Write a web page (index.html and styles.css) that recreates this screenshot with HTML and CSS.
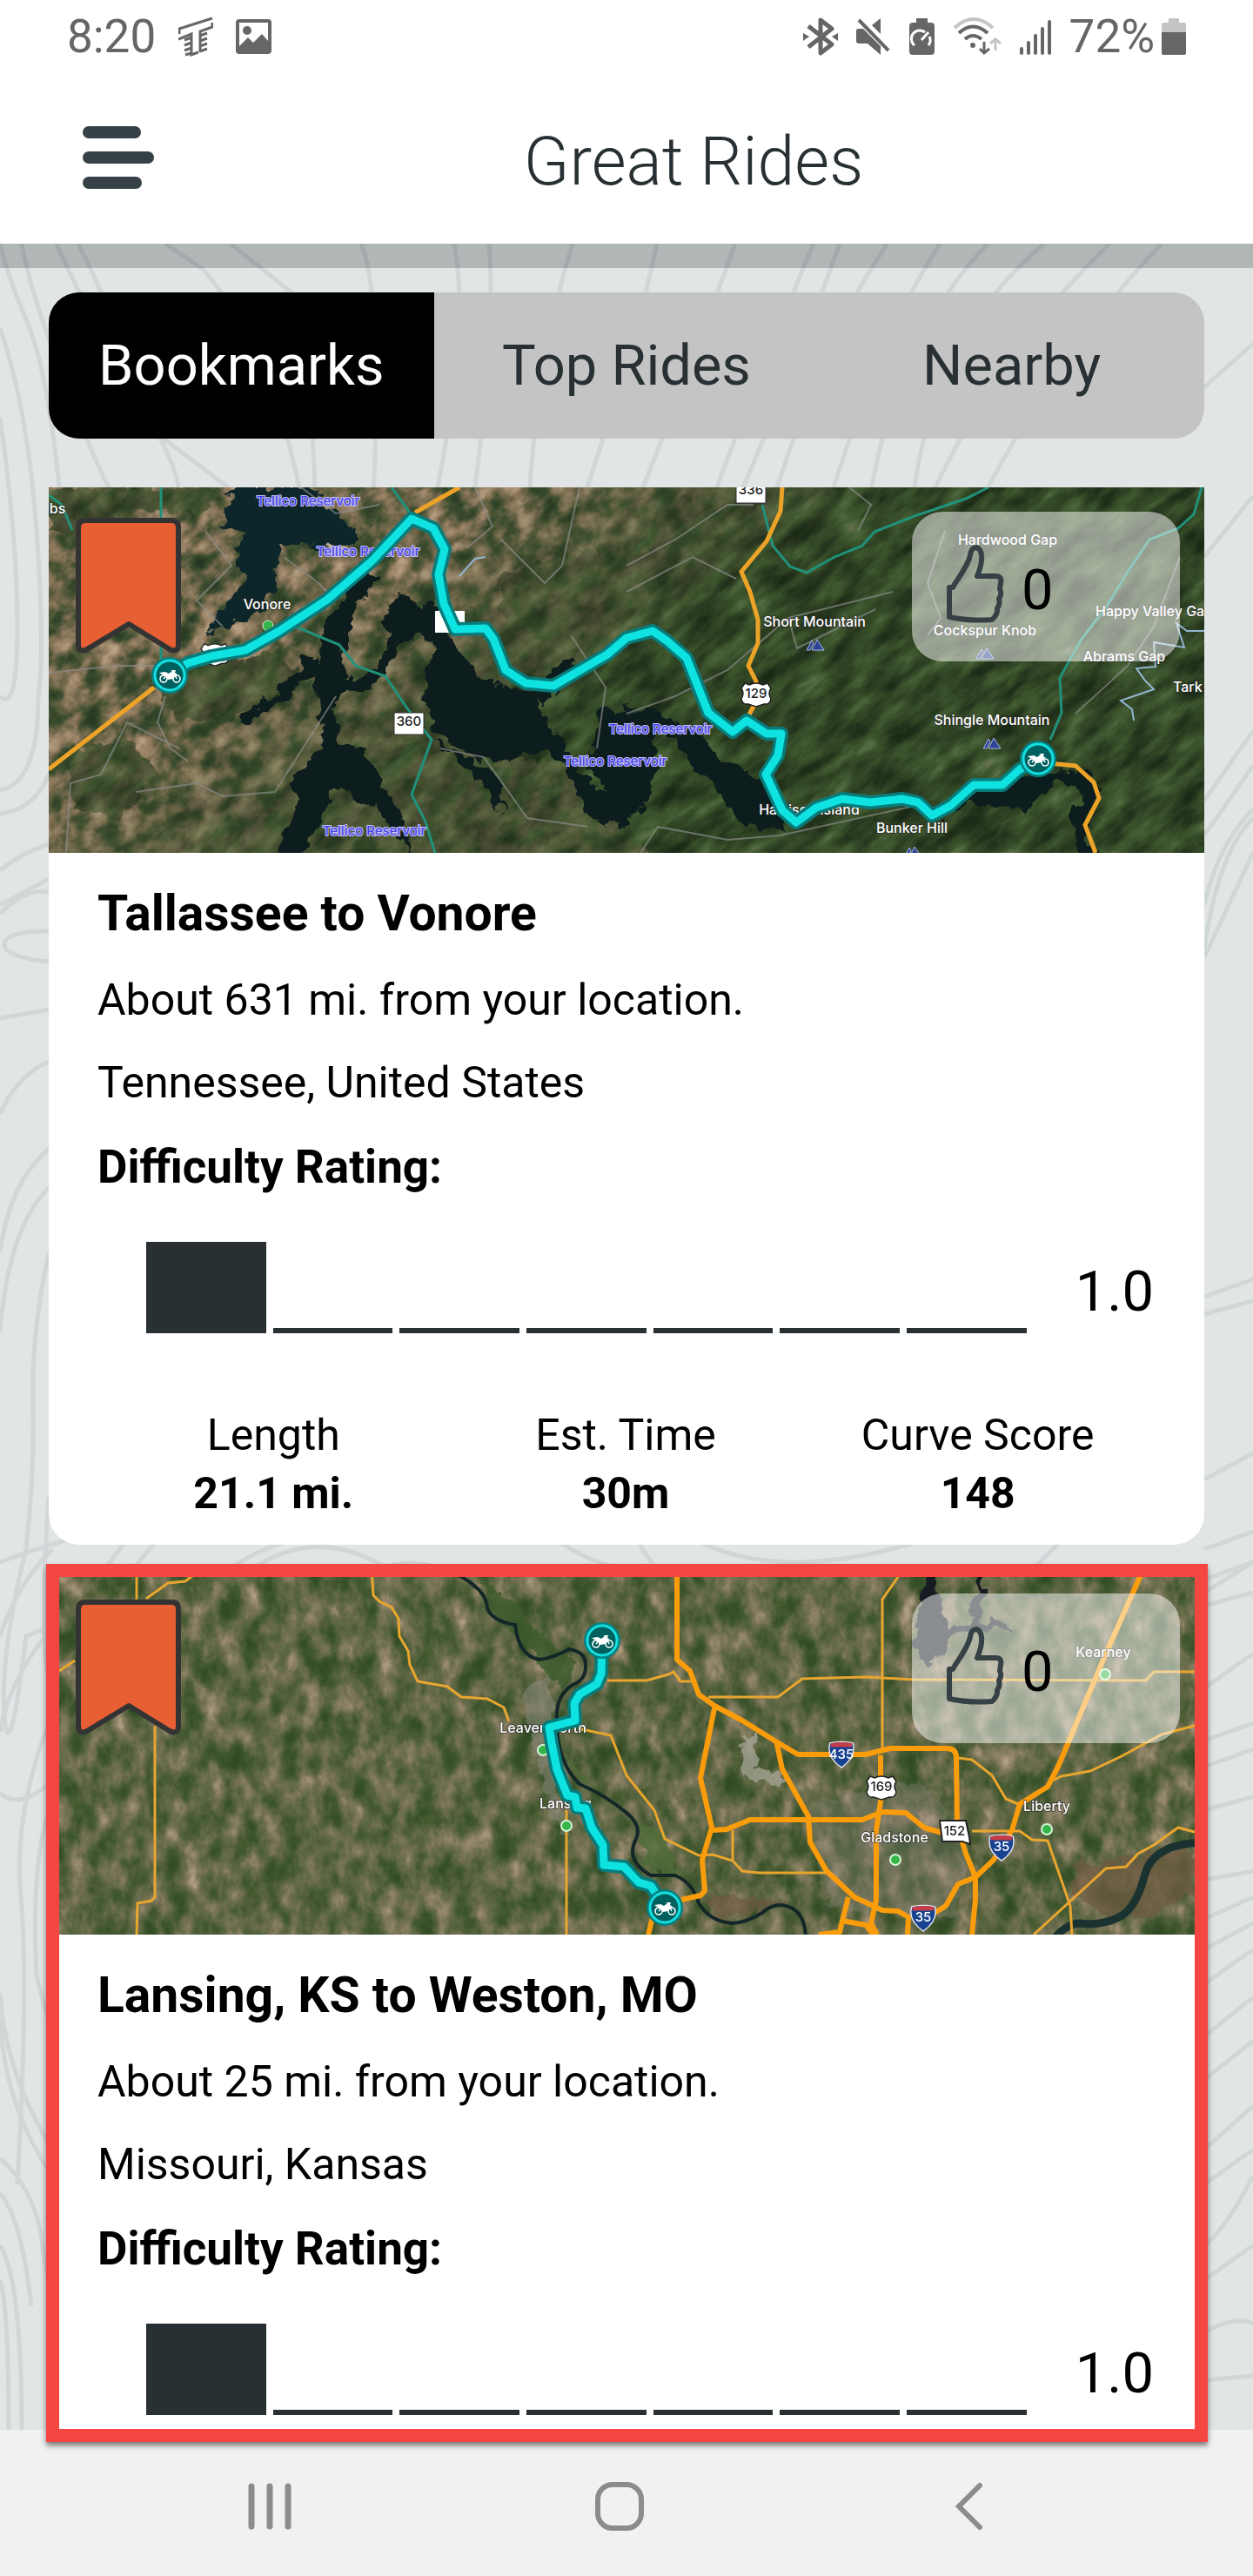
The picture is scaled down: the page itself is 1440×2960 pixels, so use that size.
FILE: index.html
```html
<!DOCTYPE html>
<html lang="en">
<head>
	<meta charset="utf-8">
	<meta name="viewport" content="width=device-width, initial-scale=1">
	<title>Great Rides</title>
	<link rel="stylesheet" href="styles.css">
</head>
<body>
<!-- shared filters and symbols -->
<svg class="defs" width="0" height="0" aria-hidden="true">
	<defs>
		<filter id="farm" x="0" y="0" width="1" height="1" color-interpolation-filters="sRGB">
			<feTurbulence type="fractalNoise" baseFrequency=".035 .045" numOctaves="6" seed="14"/>
			<feColorMatrix values=".6 .4 0 0 0  .6 .4 0 0 0  .6 .4 0 0 0  0 0 0 0 1"/>
			<feComponentTransfer>
				<feFuncR type="table" tableValues=".14 .14 .15 .18 .25 .42 .57 .68 .75 .8 .8"/>
				<feFuncG type="table" tableValues=".2 .2 .21 .25 .31 .39 .49 .59 .66 .7 .7"/>
				<feFuncB type="table" tableValues=".13 .13 .13 .15 .19 .28 .38 .48 .55 .6 .6"/>
			</feComponentTransfer>
		</filter>
		<filter id="forest" x="0" y="0" width="1" height="1" color-interpolation-filters="sRGB">
			<feTurbulence type="fractalNoise" baseFrequency=".02 .055" numOctaves="6" seed="9"/>
			<feColorMatrix values="1 0 0 0 0  1 0 0 0 0  1 0 0 0 0  0 0 0 0 1"/>
			<feComponentTransfer>
				<feFuncR type="table" tableValues=".1 .1 .11 .14 .17 .2 .23 .26 .32 .4 .4"/>
				<feFuncG type="table" tableValues=".16 .16 .17 .2 .24 .28 .32 .36 .41 .45 .45"/>
				<feFuncB type="table" tableValues=".08 .08 .09 .11 .13 .15 .17 .2 .25 .3 .3"/>
			</feComponentTransfer>
		</filter>
		<filter id="plains" x="0" y="0" width="1" height="1" color-interpolation-filters="sRGB">
			<feTurbulence type="fractalNoise" baseFrequency=".045 .03" numOctaves="7" seed="37"/>
			<feColorMatrix values=".5 .5 0 0 0  .5 .5 0 0 0  .5 .5 0 0 0  0 0 0 0 1"/>
			<feComponentTransfer>
				<feFuncR type="table" tableValues=".18 .18 .19 .21 .27 .36 .46 .58 .7 .75 .75"/>
				<feFuncG type="table" tableValues=".28 .28 .29 .31 .35 .4 .45 .53 .63 .68 .68"/>
				<feFuncB type="table" tableValues=".14 .14 .14 .16 .19 .26 .33 .42 .52 .57 .57"/>
			</feComponentTransfer>
		</filter>
		<filter id="shore" x="-.05" y="-.05" width="1.1" height="1.1">
			<feTurbulence type="fractalNoise" baseFrequency=".06" numOctaves="3" seed="2"/>
			<feDisplacementMap in="SourceGraphic" scale="22" xChannelSelector="R" yChannelSelector="G"/>
		</filter>
		<linearGradient id="fade" x1="0" y1="0" x2="1" y2=".45">
			<stop offset=".34" stop-color="#000"/>
			<stop offset=".6" stop-color="#fff"/>
		</linearGradient>
		<mask id="forestMask">
			<rect width="1328" height="420" fill="url(#fade)"/>
			<g fill="#aaa" filter="url(#shore)">
				<path d="M290 430 340 340 450 300 600 320 700 430ZM120 230 190 200 250 190 300 215 240 260 150 270ZM20 300 90 290 130 330 80 380 30 370ZM0 0 190 0 180 30 100 25 40 60 0 50ZM520 100 620 70 680 110 640 190 560 210 520 160Z"/>
			</g>
		</mask>
	</defs>
	<symbol id="pin" viewBox="-22 -22 44 44">
		<circle r="21" fill="#067f80"/>
		<circle r="17" fill="#00605f" stroke="#14dfe0" stroke-width="3"/>
		<g fill="none" stroke="#fff" stroke-width="1.6">
			<circle cx="-7" cy="4" r="4"/>
			<circle cx="8" cy="4" r="4"/>
			<path d="M-7 4-3-1M8 4 4-5"/>
		</g>
		<path d="M-12-3-5-4-1-2 3-5 1-6 7-6 6-3 9-1 5 0 4 4-2 5-5 1-9-1Z" fill="#fff"/>
	</symbol>
	<symbol id="peak" viewBox="0 0 20 14"><path d="M0 13 6 2 8 5 4 13ZM6 13 12 1 20 13Z" fill="#2c4391" stroke="#a9b7ea" stroke-width="1"/></symbol>
	<symbol id="interstate" viewBox="0 0 34 34">
		<path d="M3 3Q17 0 31 3 36 20 17 33-2 20 3 3Z" fill="#174391" stroke="#e6e6f0" stroke-width="1.5"/>
		<path d="M4 3.500Q17 1 30 3.500V8H4Z" fill="#c53d49"/>
	</symbol>
	<symbol id="usroute" viewBox="0 0 36 30"><path d="M5 2 10 4Q18 0 26 4L31 2 35 8Q31 13 35 20 34 27 27 26L18 29 9 26Q2 27 1 20 5 13 1 8Z" fill="#fff" stroke="#222" stroke-width="1.500"/></symbol>
	<symbol id="bookmark" viewBox="0 0 121 156"><path d="M3 11Q3 3 11 3H110Q118 3 118 11V145Q118 156 108 151L61 122 13 151Q3 156 3 145Z" fill="#e75f32" stroke="#333" stroke-width="6" stroke-linejoin="round"/></symbol>
	<symbol id="thumb" viewBox="0 0 66 90"><path d="M3 49H7C12 39 24 26 27 12 28 5 31 3 34 3 41 5 43 17 35 36H56Q64 36 62 44L61 51Q64 56 60 62 62 68 58 73 59 80 52 86 25 88 3 83Z" fill="none" stroke="#364145" stroke-width="6" stroke-linejoin="round"/></symbol>
	<path id="ride1" d="M139 216 160 202 187 194 226 187 265 165 320 129 371 85 417 36 442 47 455 71 448 100 454 134 467 163 502 162 511 174 525 210 548 225 580 228 642 192 664 173 694 165 710 176 733 196 758 259 786 281 802 268 825 283 842 283 838 308 824 330 843 371 859 385 882 368 912 358 944 362 981 358 999 362 1015 377 1036 366 1063 342 1096 342 1116 324 1137 312"/>
	<path id="ride2" d="M636 82 635 120 630 132 610 144 604 154 605 174 575 182 578 200 584 230 596 260 605 262 607 274 617 275 624 297 637 317 638 340 661 342 678 360 692 364 708 389"/>
</svg>

<div class="statusbar">
	<div class="status-left">
		<span class="clock">8:20</span>
		<svg width="40" height="46" viewBox="0 0 40 46" fill="none" stroke="#666" stroke-width="3">
			<path d="M1 20V14L39 2M0 26 15 20V44L23 41M39 7V12L25 17V41M15 24 7 27M15 30 7 33M15 36 7 39M15 42 8 44M25 22 33 19M25 28 33 25M25 34 33 31M25 40 33 37"/>
		</svg>
		<svg class="picture-icon" width="41" height="40" viewBox="0 0 41 40">
			<path fill="#666" fill-rule="evenodd" d="M4 0H37Q41 0 41 4V36Q41 40 37 40H4Q0 40 0 36V4Q0 0 4 0ZM4 4V31L14 21 20 27 30 17 37 25V4Z"/>
			<circle cx="13" cy="13" r="5" fill="#666"/>
		</svg>
	</div>
	<div class="status-right">
		<svg width="40" height="44" viewBox="0 0 40 44">
			<path d="M6 10 33 31 20 41V3L33 13 6 34" fill="none" stroke="#666" stroke-width="5" stroke-linejoin="round"/>
			<path d="M0 18V27L7 22ZM40 18V27L33 22Z" fill="#666"/>
		</svg>
		<svg width="40" height="44" viewBox="0 0 40 44">
			<path d="M0 15Q0 13 3 13H8L28 33V43L13 30H3Q0 30 0 27ZM18 9 28 1V19Z" fill="#666"/>
			<path d="M3 3 37 38" stroke="#666" stroke-width="4"/>
		</svg>
		<svg width="29" height="44" viewBox="0 0 29 44">
			<path d="M8 1H21V6H25Q29 6 29 10V39Q29 43 25 43H4Q0 43 0 39V10Q0 6 4 6H8Z" fill="#666"/>
			<path d="M6 32A9 9 0 0 1 18 17M23 22A9 9 0 0 1 22 32M14 26 22 17" fill="none" stroke="#fff" stroke-width="3"/>
		</svg>
		<svg width="56" height="44" viewBox="0 0 56 44" fill="none">
			<path d="M2 12Q24-8 46 12" stroke="#c4c4c4" stroke-width="4"/>
			<path d="M7 18Q23 3 40 18M14 25Q23 17 33 25" stroke="#666" stroke-width="4"/>
			<circle cx="23" cy="32" r="3" fill="#666"/>
			<path d="M36 28V41M31 36 36 41 42 36" stroke="#666" stroke-width="3"/>
			<path d="M49 38V25M43 30 49 25 55 30" stroke="#c4c4c4" stroke-width="3"/>
		</svg>
		<svg width="36" height="44" viewBox="0 0 36 44"><path d="M2 36V41M10 29V41M18 21V41M26 13V41M34 5V41" stroke="#666" stroke-width="4" stroke-linecap="round"/></svg>
		<span class="battery">72%
			<svg width="28" height="44" viewBox="0 0 28 44">
				<path d="M8 1H20V6H26Q28 6 28 8V18H0V8Q0 6 2 6H8Z" fill="#c4c4c4"/>
				<path d="M0 17H28V41Q28 43 26 43H2Q0 43 0 41Z" fill="#666"/>
			</svg>
		</span>
	</div>
</div>

<header class="header">
	<button class="menu" type="button" aria-label="Menu">
		<svg width="82" height="74" viewBox="0 0 82 74" stroke="#364145" stroke-width="14" stroke-linecap="round"><path d="M7 7H60M7 36H75M7 65H61"/></svg>
	</button>
	<h1>Great Rides</h1>
</header>

<main class="content">
	<!-- contour lines -->
	<svg class="contours" viewBox="0 0 1440 2512" preserveAspectRatio="xMidYMin slice" fill="none" stroke="#d1d6d7" stroke-width="5" aria-hidden="true">
		<path d="M0 0Q8 35 32 92T70 300M25 0Q35 60 90 200T150 290M65 0Q90 60 160 180T190 290M90 0Q120 60 188 224L262 280M190 0 234 30Q310 120 344 280M265 0 340 60Q360 180 362 290M415 0Q440 60 429 290M522 0Q540 90 503 280M562 0Q570 90 546 280M658 0Q620 120 608 290M755 0 730 110 675 280M845 0 790 150 735 290M935 0Q880 130 820 290M965 0Q930 100 850 290M1020 0Q950 100 890 290M1080 0Q1010 110 955 290M1135 0Q1030 110 1000 290M1200 0Q1070 110 1050 290M1275 0Q1150 120 1070 290M1335 0Q1220 120 1130 290"/>
		<path d="M0 97Q32 190 42 330T44 521Q44 620 0 628M0 200Q20 340 20 440T0 520M0 655Q40 650 56 610M0 720Q25 700 56 690M0 760 56 730M1384 165 1440 115M1384 360 1440 290M1384 640 1440 560M1384 680 1440 600M1384 760Q1400 690 1440 650M1384 820 1440 700"/>
		<path d="M0 770Q30 740 56 745M56 790Q5 790 5 805T56 825M0 890 56 880M0 1000Q20 955 56 940M0 1160Q10 1080 56 1040M0 1250Q10 1130 56 1085M56 1160Q36 1250 38 1330T30 1500Q0 1620 5 1690T30 1600L56 1590M56 1440Q45 1600 56 1650M0 1780Q20 1800 56 1770M1384 810Q1400 700 1440 660M1384 1210 1440 1190M1384 1230 1440 1215M1384 1420 1440 1390M1384 1500 1440 1480M1384 1535 1440 1515M1384 1565 1440 1550"/>
		<path d="M0 1515Q40 1500 75 1490M100 1550 145 1490M130 1550 180 1490M255 1530Q330 1470 430 1490M280 1530Q370 1460 470 1540M430 1525Q480 1505 520 1530M640 1490Q700 1530 760 1525M735 1495 755 1525M800 1490Q900 1540 1060 1490M1180 1530 1220 1490M0 1600Q20 1540 60 1500M0 1710Q10 1650 60 1590M60 1690Q15 1800 24 1900T20 2230M60 1790Q35 1850 42 1990L60 2060M0 2010Q5 2100 60 2190M0 2040Q5 2140 60 2220M0 2200Q45 2240 50 2310L60 2360M0 2240Q25 2270 36 2370M0 2300Q25 2340 25 2512M0 2340Q10 2370 10 2512M1384 1550 1440 1515M1384 1660 1440 1620M1384 1720 1440 1700M1384 1750 1440 1730M1384 1800 1440 1785M1384 1880 1440 1870M1384 1925 1440 1900M1384 1960 1440 1930"/>
		<path d="M1384 2000 1440 1960M1384 2060 1440 2015M1384 2110 1440 2065M1384 2190 1440 2140M1384 2230 1440 2190M1384 2300Q1410 2280 1440 2220M1384 2340 1440 2300M1384 2400Q1420 2380 1440 2390M1384 2455 1440 2450"/>
	</svg>

	<div class="tabs" role="tablist">
		<button class="tab active" type="button" role="tab" aria-selected="true">Bookmarks</button>
		<button class="tab" type="button" role="tab" aria-selected="false">Top Rides</button>
		<button class="tab" type="button" role="tab" aria-selected="false">Nearby</button>
	</div>

	<article class="card">
		<div class="map">
			<svg class="map-art" viewBox="0 0 1328 420" preserveAspectRatio="xMidYMid slice" role="img" aria-label="Map of Tallassee to Vonore">
				<g transform="rotate(-35 664 210)"><rect x="-300" y="-700" width="2000" height="1800" filter="url(#farm)"/></g>
				<g mask="url(#forestMask)"><rect x="-300" y="-700" width="2000" height="1800" filter="url(#forest)" transform="rotate(-38 664 210)"/></g>
				<!-- reservoir -->
				<g fill="#0f1f1c" filter="url(#shore)">
					<path fill="#10272a" d="M203 0 215 25 190 45 222 50 215 80 225 110 210 130 180 170 215 155 245 140 260 120 265 65 330 68 358 64 345 35 310 20 312 0Z"/>
					<path d="M355 98 316 165 307 210 311 268 316 299 279 330 284 370 255 430H290L330 344 380 370 420 430 395 360 364 304 334 290 330 250 337 236 376 232 403 178 431 170 450 187 431 219 440 277 490 312 523 314 578 304 596 326 605 361 640 392 665 370 620 335 587 290 564 254 550 237 495 219 470 183 445 138 403 123 385 140 392 170 375 210 339 220 340 174 352 143 378 98Z"/>
					<path d="M307 190 260 235 218 270 225 275 270 240 312 215ZM440 290 500 340 525 375 515 330ZM550 240 600 195 605 200 570 250Z"/>
					<path d="M664 250 700 259 740 277 765 308 806 326 825 348 850 395 800 393 774 357 737 312 710 281 673 281ZM632 256 700 258 694 335 680 375 655 388 640 350 620 320Z"/>
					<path d="M999 362 1018 385 1059 364 1123 370 1160 339 1190 350 1174 384 1185 430H1205L1190 390 1210 350 1192 326 1137 322 1063 350 1015 382Z"/>
				</g>
				<!-- local roads -->
				<g fill="none" stroke="#8f8f8d" stroke-opacity=".65" stroke-width="2">
					<path d="M0 213 80 205 123 205M134 240 125 270 140 300 160 315M20 420 25 340 60 330 90 270 150 300M100 350 170 340 200 355 260 350 330 240M180 50 210 90 170 130 200 160M270 80 310 110 330 130M490 0 510 45 480 70M520 60 570 110 590 90 610 0M450 300 500 310 550 380 620 390M380 20 330 30 290 0M664 90 720 60 780 20 810 20M664 120 740 80 790 105M664 260 720 240 780 210 850 150 970 120M850 150 860 185 950 140M920 0 945 20 930 50M1010 170 1025 150 1010 110 1030 50M1180 260 1240 205 1270 160 1300 80M680 420 700 390 780 405 840 400 1000 365M600 170 640 230 630 300"/>
				</g>
				<g fill="none" stroke="#21917b" stroke-width="3">
					<path d="M0 9 15 20 27 49M129 0V200M394 0 417 32M286 161 334 181 353 205 387 217 412 254 440 290 417 353 433 384 444 420M820 20 832 67 852 91 871 98 903 80 935 67 949 51 995 33 1054 13 1080 0M1325 0 1316 31 1298 47 1265 60 1242 94 1215 138 1187 174 1162 219 1164 259 1151 290"/>
				</g>
				<path d="M1328 165 1308 165 1296 156 1305 184 1270 178 1272 206 1250 208 1260 222 1270 232 1232 245 1245 255 1247 268M472 102 490 82 502 80" fill="none" stroke="#93b6d1" stroke-width="2"/>
				<path d="M0 324 121 230M421 29 472 0M843 0 841 27 825 62 796 97 806 120 815 152 815 179 804 205 813 223 811 250 800 270M1150 317 1180 320 1201 339 1207 357 1191 388 1203 420" fill="none" stroke="#eda328" stroke-width="5"/>

				<rect x="444" y="142" width="34" height="25" fill="#fff"/>
				<rect x="397" y="259" width="34" height="25" fill="#fff" stroke="#333"/>
				<rect x="790" y="-12" width="34" height="30" fill="#fff" stroke="#333"/>
				<use href="#usroute" x="794" y="223" width="38" height="30"/>
				<use href="#usroute" x="173" y="178" width="36" height="28"/>
				<circle cx="252" cy="159" r="6" fill="#36b549" stroke="#d7f5d7"/>
				<g class="shield-text">
					<text x="414" y="274">360</text>
					<text x="807" y="8">336</text>
					<text x="813" y="242">129</text>
				</g>
				<g class="water-label">
					<text x="298" y="21">Tellico Reservoir</text>
					<text x="367" y="79">Tellico Reservoir</text>
					<text x="374" y="400">Tellico Reservoir</text>
					<text x="703" y="283">Tellico Reservoir</text>
					<text x="651" y="320">Tellico Reservoir</text>
				</g>
				<g class="place-label">
					<text x="10" y="30">bs</text>
					<text x="251" y="140">Vonore</text>
					<text x="880" y="160">Short Mountain</text>
					<text x="1102" y="66">Hardwood Gap</text>
					<text x="1076" y="170">Cockspur Knob</text>
					<text x="1236" y="200">Abrams Gap</text>
					<text x="1084" y="273">Shingle Mountain</text>
					<text x="874" y="376">Harrison Island</text>
					<text x="992" y="397">Bunker Hill</text>
					<text x="1203" y="148" class="from-left">Happy Valley Ga</text>
					<text x="1292" y="235" class="from-left">Tark</text>
				</g>
				<use href="#peak" x="871" y="174" width="20" height="14"/>
				<use href="#peak" x="1066" y="184" width="20" height="14"/>
				<use href="#peak" x="1074" y="287" width="20" height="14"/>
				<use href="#peak" x="983" y="412" width="20" height="14"/>

				<use href="#ride1" class="route-edge"/>
				<use href="#ride1" class="route"/>
				<use href="#pin" x="117" y="194" width="44" height="44"/>
				<use href="#pin" x="1115" y="290" width="44" height="44"/>
			</svg>
			<button class="bookmark" type="button" aria-label="Remove bookmark"><svg width="121" height="156"><use href="#bookmark"/></svg></button>
			<button class="like" type="button" aria-label="Like"><svg width="66" height="90"><use href="#thumb"/></svg><span>0</span></button>
		</div>
		<div class="info">
			<h2>Tallassee to Vonore</h2>
			<p>About 631 mi. from your location.</p>
			<p>Tennessee, United States</p>
			<h3>Difficulty Rating:</h3>
			<div class="rating">
				<div class="bars"><i class="on"></i><i></i><i></i><i></i><i></i><i></i><i></i></div>
				<span class="score">1.0</span>
			</div>
			<dl class="stats">
				<div><dt>Length</dt><dd>21.1 mi.</dd></div>
				<div><dt>Est. Time</dt><dd>30m</dd></div>
				<div><dt>Curve Score</dt><dd>148</dd></div>
			</dl>
		</div>
	</article>

	<article class="card selected">
		<div class="map">
			<svg class="map-art" viewBox="0 0 1328 420" preserveAspectRatio="xMidYMid slice" role="img" aria-label="Map of Lansing, KS to Weston, MO">
				<rect width="1328" height="420" filter="url(#plains)"/>
				<!-- towns, airport and river bottoms -->
				<g filter="url(#shore)">
					<path d="M800 190 815 190 815 225 845 240 830 250 795 240Z" fill="#aaa99b" opacity=".7"/>
					<path d="M545 150 575 110 580 180 580 240 600 310 580 290 560 220Z" fill="#8d8f82" opacity=".45"/>
					<path d="M870 270 1000 240 1060 320 1040 400 900 390Z" fill="#8d8880" opacity=".3"/>
					<path d="M495 10 530 40 580 90 610 110 590 140 560 100 510 50Z" fill="#3b5b2c" opacity=".8"/>
					<path d="M590 210 640 260 700 300 730 350 690 350 670 280 610 240Z" fill="#4f6c38" opacity=".8"/>
					<path d="M755 375 850 380 800 400 765 400ZM1180 340 1316 320 1316 370 1270 400 1220 400 1180 380Z" fill="#6f5b45" opacity=".7"/>
				</g>
				<path d="M1005 0 1020 0 1022 40 1035 70 1060 60 1068 0 1074 0 1072 58 1100 62 1110 72 1065 68 1030 85 1010 115 992 85 1000 50Z" fill="#141f24" filter="url(#shore)"/>
				<path d="M455 0Q480 10 490 20 503 30 504 45 510 60 536 64 540 100 564 104 580 102 598 92 617 95 617 110 618 127 602 133 584 145 584 167 582 220 610 247 640 260 664 280 682 295 675 310 662 335 692 352H720Q740 360 747 384 760 405 785 407 800 407 820 395 830 385 843 386 870 390 870 425" fill="none" stroke="#142728" stroke-width="4"/>
				<path d="M1155 425Q1170 407 1185 407 1210 410 1230 400 1250 390 1260 350 1270 315 1328 314" fill="none" stroke="#1b3330" stroke-width="9"/>

				<g fill="none" stroke="#e8a62f" stroke-width="3">
					<path d="M101 0V35M175 0 157 14 137 16 112 34M0 125 30 105M122 180V377L118 381 102 384 101 420M371 0 373 30 380 37 394 44 402 57 403 77 413 94 415 110 424 129 458 135 474 147 504 149 523 159 529 175M595 277V420M612 184 646 191 664 237 696 277 708 310 747 329 763 328 786 335 797 347 816 349 894 349M786 335V300"/>
					<path d="M642 128 687 128 712 121 718 118 726 129 740 129M758 147 838 147 866 126 939 124 995 127 1261 128 1270 118 1328 118M980 0 976 9 958 35V207M1045 217 1061 219 1084 237 1100 264 1114 270M1151 244 1164 238 1197 232 1233 215 1279 190 1328 177M1061 301 1116 301 1130 311 1148 312 1174 387 1176 420M1132 420 1215 344 1238 342 1252 327 1270 317 1298 297 1328 305"/>
				</g>
				<g fill="none" stroke="#fb9c0b" stroke-width="6" stroke-linejoin="round">
					<path d="M722 0V104L737 117 747 144 765 157 797 174 834 197 861 213 939 213 967 206 1031 206Q1043 206 1043 216L1044 294 1054 327 1065 354V380L1061 420M765 160 749 240 762 297 751 334 754 370 749 375 727 380M694 400 689 420M836 197 843 230 873 284 875 314 894 347 926 377 958 392 976 393 988 400 987 420M762 300 779 299 806 288 935 288 958 279 985 280 1006 297 1030 304"/>
					<path d="M956 214V267L951 300V380L945 407 952 420M919 377 912 404 939 409 948 420M912 404 909 417 885 420M1258 0 1215 97 1160 227 1148 250 1116 270 1107 300 1086 334 1065 354 1045 362 1031 387 1005 403"/>
				</g>

				<use href="#interstate" x="894" y="197" width="34" height="32"/>
				<use href="#interstate" x="1078" y="304" width="34" height="32"/>
				<use href="#interstate" x="988" y="385" width="34" height="32"/>
				<use href="#usroute" x="938" y="236" width="38" height="30"/>
				<path d="M1024 289 1054 289 1058 308 1059 316 1050 313H1027Z" fill="#fff" stroke="#222" stroke-width="2"/>
				<g class="shield-text">
					<text x="957" y="255">169</text>
					<text x="1041" y="306">152</text>
					<g class="light">
						<text x="911" y="218">435</text>
						<text x="1095" y="324">35</text>
						<text x="1005" y="405">35</text>
					</g>
				</g>
				<g fill="#36b549" stroke="#d7f5d7" stroke-width="2">
					<circle cx="568" cy="208" r="6"/>
					<circle cx="595" cy="295" r="6"/>
					<circle cx="973" cy="334" r="6"/>
					<circle cx="1147" cy="299" r="6"/>
					<circle cx="1214" cy="121" r="6"/>
				</g>
				<g class="place-label">
					<text x="568" y="188">Leavenworth</text>
					<text x="594" y="275">Lansing</text>
					<text x="972" y="314">Gladstone</text>
					<text x="1147" y="278">Liberty</text>
					<text x="1212" y="101">Kearney</text>
				</g>

				<use href="#ride2" class="route-edge"/>
				<use href="#ride2" class="route"/>
				<use href="#pin" x="614" y="60" width="44" height="44"/>
				<use href="#pin" x="686" y="367" width="44" height="44"/>
			</svg>
			<button class="bookmark" type="button" aria-label="Remove bookmark"><svg width="121" height="156"><use href="#bookmark"/></svg></button>
			<button class="like" type="button" aria-label="Like"><svg width="66" height="90"><use href="#thumb"/></svg><span>0</span></button>
		</div>
		<div class="info">
			<h2>Lansing, KS to Weston, MO</h2>
			<p>About 25 mi. from your location.</p>
			<p>Missouri, Kansas</p>
			<h3>Difficulty Rating:</h3>
			<div class="rating">
				<div class="bars"><i class="on"></i><i></i><i></i><i></i><i></i><i></i><i></i></div>
				<span class="score">1.0</span>
			</div>
		</div>
	</article>
</main>

<nav class="navbar">
	<button type="button" aria-label="Recent apps"><svg width="52" height="56" viewBox="0 0 52 56" stroke="#8c8c8c" stroke-width="7" stroke-linecap="round"><path d="M5 5V51M26 5V51M47 5V51"/></svg></button>
	<button type="button" aria-label="Home"><svg width="56" height="56" viewBox="0 0 56 56"><rect x="3" y="3" width="50" height="50" rx="17" fill="none" stroke="#8c8c8c" stroke-width="6"/></svg></button>
	<button type="button" aria-label="Back"><svg width="32" height="56" viewBox="0 0 32 56"><path d="M28 4 4 28 28 52" fill="none" stroke="#8c8c8c" stroke-width="6" stroke-linecap="round"/></svg></button>
</nav>
</body>
</html>
```
FILE: styles.css
```css
*{
	box-sizing: border-box;
}
body{
	margin: 0;
	min-height: 100vh;
	display: flex;
	flex-direction: column;
	font-family: Roboto, "Liberation Sans", sans-serif;
	font-size: 50px;
	color: #000;
	background-color: #e1e5e6;
}
h1, h2, h3, p, dl, dd{
	margin: 0;
}
svg{
	display: block;
	flex: none;
}
.defs{
	position: absolute;
}
button{
	margin: 0;
	padding: 0;
	border: 0;
	background: none;
	font: inherit;
	color: inherit;
	cursor: pointer;
}

/* status bar */
.statusbar{
	display: flex;
	justify-content: space-between;
	align-items: center;
	height: 84px;
	padding: 0 77px;
	background-color: #fff;
	color: #666;
	font-size: 53px;
}
.status-left, .status-right, .battery{
	display: flex;
	align-items: center;
}
.status-left{
	gap: 26px;
}
.status-right{
	gap: 21px;
}
.battery{
	gap: 8px;
}

/* header */
.header{
	display: flex;
	align-items: center;
	height: 196px;
	padding: 0 23px 0 95px;
	background-color: #fff;
}
.header h1{
	flex: 1;
	padding-top: 8px;
	text-align: center;
	font-size: 77px;
	font-weight: 300;
	color: #283033;
}

.content{
	position: relative;
	flex: 1;
	padding: 0 56px;
}
.content::before{
	content: "";
	display: block;
	position: relative;
	z-index: 1;
	height: 28px;
	margin: 0 -56px 28px;
	background-color: rgba(0, 8, 10, .21);
}
.contours{
	position: absolute;
	top: 0;
	left: 0;
	width: 100%;
	height: 100%;
}

/* tabs */
.tabs{
	position: relative;
	display: grid;
	grid-template-columns: repeat(3, 1fr);
	height: 168px;
	margin-bottom: 56px;
	border-radius: 35px;
	overflow: hidden;
	background-color: #c4c4c4;
}
.tab{
	font-size: 65px;
	color: #283033;
}
.tab.active{
	background-color: #000;
	color: #fff;
}

/* ride card */
.card{
	position: relative;
	margin-bottom: 28px;
	border-radius: 0 0 35px 35px;
	background-color: #fff;
}
.map{
	position: relative;
	height: 420px;
}
.map-art{
	width: 100%;
	height: 100%;
}
.bookmark{
	position: absolute;
	top: 35px;
	left: 31px;
}
.like{
	position: absolute;
	top: 28px;
	right: 28px;
	display: flex;
	align-items: flex-end;
	gap: 20px;
	width: 308px;
	height: 172px;
	padding: 0 0 44px 40px;
	border-radius: 35px;
	background-color: rgba(255, 255, 255, .5);
	font-size: 65px;
}
.route-edge, .route{
	fill: none;
	stroke-linejoin: round;
}
.route-edge{
	stroke: #087b7b;
	stroke-width: 16px;
}
.route{
	stroke: #0fe3e2;
	stroke-width: 9px;
}
.place-label, .water-label, .shield-text{
	font-family: Inter, "Open Sans", sans-serif;
	font-size: 16px;
	font-weight: 500;
	text-anchor: middle;
	paint-order: stroke;
	stroke-width: 2px;
}
.place-label{
	fill: #fff;
	stroke: rgba(40, 40, 40, .6);
}
.place-label .from-left{
	text-anchor: start;
}
.water-label{
	fill: #4a44ee;
	stroke: #c5c3f5;
	font-size: 15px;
}
.shield-text{
	fill: #222;
	font-size: 15px;
}
.shield-text .light{
	fill: #fff;
}

.info{
	display: flex;
	flex-direction: column;
	gap: 37px;
	padding: 37px 58px 30px 56px;
	line-height: 58px;
}
.info h2{
	font-size: 57px;
	line-height: 66px;
}
.info h3{
	font-size: 53px;
	line-height: 62px;
}
.rating{
	display: flex;
	align-items: center;
	gap: 56px;
	margin-top: 18px;
	padding-left: 56px;
}
.bars{
	flex: 1;
	display: flex;
	align-items: flex-end;
	gap: 8px;
	height: 105px;
}
.bars i{
	flex: 1;
	height: 6px;
	background-color: #283033;
}
.bars .on{
	height: 105px;
}
.score{
	padding-top: 8px;
	font-size: 65px;
}
.stats{
	display: grid;
	grid-template-columns: repeat(3, 1fr);
	margin-top: 51px;
	text-align: center;
}
.stats dd{
	margin-top: 9px;
	font-weight: 700;
}

/* red frame round the selected ride */
.selected{
	margin-bottom: 0;
	border-radius: 0;
}
.selected .info{
	padding-bottom: 16px;
}
.selected::after{
	content: "";
	position: absolute;
	z-index: 2;
	top: -6px;
	right: -4px;
	bottom: -15px;
	left: -3px;
	border: 15px solid #f64642;
	box-shadow: 0 4px 6px rgba(0, 0, 0, .5);
	pointer-events: none;
}

/* system navigation */
.navbar{
	display: grid;
	grid-template-columns: repeat(3, 1fr);
	height: 168px;
	padding: 7px 125px 0 109px;
	background-color: #f1f1f1;
}
.navbar button{
	display: flex;
	align-items: center;
	justify-content: center;
}
```
